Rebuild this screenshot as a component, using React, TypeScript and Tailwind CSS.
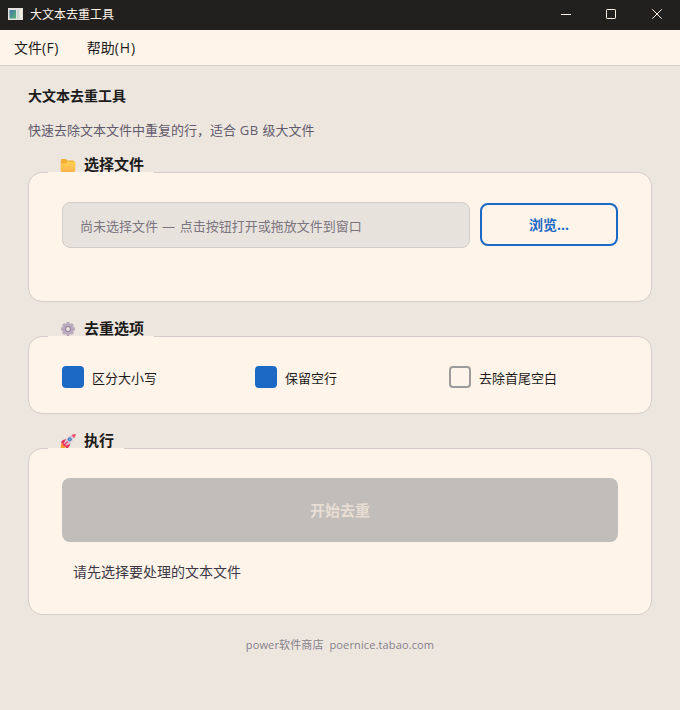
import type { ReactNode } from "react";

function AppIcon() {
  return (
    <svg width="16" height="14" viewBox="0 0 16 14" className="ml-[7px] mt-[-2px]">
      <defs>
        <linearGradient id="pane" x1="0" y1="0" x2="1" y2="1">
          <stop offset="0" stopColor="#4776a8" />
          <stop offset="1" stopColor="#55b377" />
        </linearGradient>
      </defs>
      <rect x="1" y="1" width="15" height="12" fill="#e4e2dc" />
      <rect x="2.5" y="3" width="6.5" height="8.5" fill="url(#pane)" />
      <rect x="10" y="3" width="2" height="8.5" fill="#c3d6d2" />
      <rect x="13" y="3" width="2" height="8.5" fill="#f3ece0" />
    </svg>
  );
}

function FolderIcon() {
  return (
    <svg width="16" height="16" viewBox="0 0 16 16">
      <defs>
        <linearGradient id="folder" x1="0" y1="0" x2="0" y2="1">
          <stop offset="0" stopColor="#ffd152" />
          <stop offset="1" stopColor="#fbb04c" />
        </linearGradient>
      </defs>
      <path d="M.8 3.1Q.8 2 1.9 2H5.8L7.4 3.5H13Q14.2 3.5 14.2 4.7V12H.8Z" fill="#f3ae35" />
      <path d="M.8 6.5H5.9L7.8 4.8H14.4Q15.8 4.8 15.6 6.2L15 14Q14.8 15.5 13 15.5H2.6Q.8 15.5 .8 13.5Z" fill="url(#folder)" />
    </svg>
  );
}

function GearIcon() {
  return (
    <svg width="16" height="16" viewBox="0 0 16 16">
      <g fill="#b9aabd">
        {[0, 45, 90, 135].map((angle) => (
          <rect key={angle} x="6.3" y="1" width="3.4" height="14" rx="1" transform={`rotate(${angle} 8 8)`} />
        ))}
        <circle cx="8" cy="8" r="5.8" />
      </g>
      <circle cx="8" cy="8" r="4.4" fill="#bcaac2" />
      <circle cx="8" cy="8" r="2.5" fill="#ede6e0" stroke="#93819a" strokeWidth="1.1" />
    </svg>
  );
}

function RocketIcon() {
  return (
    <svg width="16" height="16" viewBox="0 0 16 16">
      <path d="M1 11Q3 9 5 10L7 13Q5 15.6.7 15.5Z" fill="#ff9d2e" />
      <path d="M4.5 6.5 8 5.5 4.5 10.5 1 10.2Q1.5 7 4.5 6.5ZM10.5 8.2 9.8 12.6Q8.8 15.2 6 15.4L5.7 12Z" fill="#e9315f" />
      <path d="M3.7 10.5Q6 3.7 12.5 1.8L14.3 4Q12 10.6 5.9 12.8Z" fill="#d5cbdc" />
      <path d="M11.3 2.3Q13 1 15.8.8 15.7 3.3 14.2 5Z" fill="#fa4f6d" />
      <path d="M3.3 9.8 6.8 13 4 13.4 2.5 12Z" fill="#f43a66" />
      <circle cx="9.7" cy="6.3" r="2" fill="#477db6" />
      <circle cx="9.7" cy="6.3" r="1.1" fill="#65a9dc" />
      <path d="M4.5 11.8 7.7 8.5" stroke="#ee3c68" strokeWidth="1.5" />
    </svg>
  );
}

interface SectionProps {
  icon: ReactNode;
  title: string;
  notch: string;
  cardClass: string;
  children: ReactNode;
}

function Section({ icon, title, notch, cardClass, children }: SectionProps) {
  return (
    <section>
      <div className="flex h-[17px] items-end gap-2 pl-8">
        <span className="-mb-px">{icon}</span>
        <h2 className="text-[15px] font-bold leading-[16px]">{title}</h2>
      </div>
      <div className={`relative rounded-[14px] border border-[#d5cdca] bg-[#fff4e9] px-[33px] ${cardClass}`}>
        <span className={`absolute -top-px left-[19px] h-px bg-[#fff4e9] ${notch}`} />
        {children}
      </div>
    </section>
  );
}

function Option({ label, checked = false }: { label: string; checked?: boolean }) {
  return (
    <label className="flex items-center gap-2 text-[13px] leading-[22px]">
      <span
        className={`size-[22px] rounded-[4px] border-2 ${checked ? "border-[#1b69c5] bg-[#1b69c5]" : "border-[#9e9b9d]"}`}
      />
      <span className="mt-[2px]">{label}</span>
    </label>
  );
}

export default function App() {
  return (
    <div className="flex h-[710px] w-[680px] flex-col overflow-hidden bg-[#ede6df] font-['Open_Sans','Noto_Sans_CJK_SC',sans-serif] text-[#1c1b1a]">
      <header className="flex h-[30px] shrink-0 items-center bg-[#22201e] text-[#fff4e9]">
        <AppIcon />
        <span className="ml-[7px] text-[12px] leading-[20px]">大文本去重工具</span>
        <svg className="ml-auto" width="136" height="30" viewBox="0 0 136 30" fill="none" stroke="#fff4e9">
          <path d="M17 14.5H27" />
          <rect x="62.5" y="9.5" width="9" height="9" rx=".7" />
          <path d="M108.3 9.3 117.7 18.7M117.7 9.3 108.3 18.7" />
        </svg>
      </header>
      <nav className="flex h-9 shrink-0 items-center gap-7 border-b border-[#d5cdca] bg-[#fff4e9] px-[14px] text-[14px] leading-[20px]">
        <span>文件<span className="tracking-[0.4px]">(F)</span></span>
        <span>帮助<span className="tracking-[0.9px]">(H)</span></span>
      </nav>
      <main className="px-7 pt-5">
        <h1 className="text-[14px] font-bold leading-[20px]">大文本去重工具</h1>
        <p className="mt-[14px] text-[13px] leading-[20px] text-[#625b6c]">
          快速去除文本文件中重复的行，适合<span className="tracking-[0.45px]"> GB </span>级大文件
        </p>
        <div className="mt-[15px] flex flex-col gap-[17px]">
          <Section icon={<FolderIcon />} title="选择文件" notch="w-[106px]" cardClass="h-[130px] pt-[29px]">
            <div className="flex items-start gap-[10px]">
              <div className="flex h-[46px] w-[408px] items-center whitespace-pre rounded-lg border border-[#d3cdca] bg-[#e8e2dd] px-[17px] pt-[3px] text-[13px] text-[#7b7580]">
                尚未选择文件<span className="tracking-[0.65px]"> — </span>点击按钮打开或拖放文件到窗口
              </div>
              <button className="mt-px h-[43px] flex-1 rounded-lg border-2 border-[#1b69c5] text-[14px] font-bold text-[#1b69c5]">
                浏览...
              </button>
            </div>
          </Section>
          <Section icon={<GearIcon />} title="去重选项" notch="w-[106px]" cardClass="h-[78px] pt-[28px]">
            <div className="flex">
              <div className="w-[193px]"><Option label="区分大小写" checked /></div>
              <div className="w-[194px]"><Option label="保留空行" checked /></div>
              <Option label="去除首尾空白" />
            </div>
          </Section>
          <Section icon={<RocketIcon />} title="执行" notch="w-[76px]" cardClass="h-[167px] pt-[29px]">
            <button className="flex h-16 w-full items-center justify-center rounded-lg bg-[#c1bdbb] text-[15px] font-bold text-[#e7ddd3]">
              开始去重
            </button>
            <p className="mt-5 pl-[11px] text-[14px] leading-[20px] text-[#3d3947]">请先选择要处理的文本文件</p>
          </Section>
        </div>
        <footer className="mt-5 whitespace-pre text-center text-[11px] leading-[20px] tracking-[0.13px] text-[#86818a]">
          {"power软件商店  poernice.tabao.com"}
        </footer>
      </main>
    </div>
  );
}
